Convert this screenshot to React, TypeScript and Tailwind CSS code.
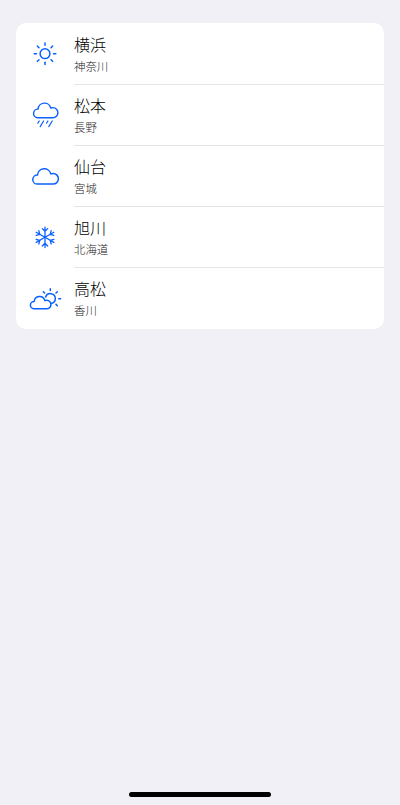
import type { ReactNode } from "react";

const sunRays = [0, 45, 90, 135, 180, 225, 270, 315];
const flakeArms = [0, 60, 120, 180, 240, 300];

function Glyph({ children }: { children: ReactNode }) {
  return (
    <svg viewBox="0 0 40 36" className="mt-3 h-9 w-10 shrink-0 fill-none stroke-[#0a60ff] stroke-[1.5]" strokeLinecap="round" strokeLinejoin="round">
      {children}
    </svg>
  );
}

const cloudPath = "M12 26.1H28a5.3 5.3 0 0 0 .2-10.6c-.9 0-1.7.1-2.4.4A6.75 6.75 0 0 0 12.5 17.1A4.5 4.5 0 0 0 12 26.1Z";

function Sun() {
  return (
    <Glyph>
      <circle cx="20" cy="17.7" r="4.9" />
      {sunRays.map((a) => (
        <path key={a} d="M20 9.2V6.9" transform={`rotate(${a} 20 17.7)`} />
      ))}
    </Glyph>
  );
}

function Rain() {
  return (
    <Glyph>
      <path d={cloudPath} transform="translate(1.2 -4.1) scale(.95)" />
      <path d="M14.2 24l-1.4 2.2M18.6 24l-3.4 5.6M22.9 24l-1.4 2.2M27.2 24l-3.4 5.6" strokeWidth="1.2" />
    </Glyph>
  );
}

function Cloud() {
  return (
    <Glyph>
      <path d={cloudPath} />
    </Glyph>
  );
}

function Snow() {
  return (
    <Glyph>
      {flakeArms.map((a) => (
        <path key={a} d="M20 18.3V8.1M17.3 9.6l2.7 2.7 2.7-2.7" strokeWidth="1.3" transform={`rotate(${a} 20 18.3)`} />
      ))}
    </Glyph>
  );
}

function PartlyCloudy() {
  return (
    <Glyph>
      <path d="M20.6 16.9a5 5 0 1 1 5.6 6.6" />
      <path d="M25.3 10.6V8.7M31 13l1.3-1.3M33.7 18.7h1.9M31 24.4l1.3 1.3M19.6 13l-1.3-1.3" />
      <path d={cloudPath} strokeWidth="1.85" transform="translate(-.8 7.9) scale(.8)" />
    </Glyph>
  );
}

const places = [
  { city: "横浜", prefecture: "神奈川", icon: <Sun /> },
  { city: "松本", prefecture: "長野", icon: <Rain /> },
  { city: "仙台", prefecture: "宮城", icon: <Cloud /> },
  { city: "旭川", prefecture: "北海道", icon: <Snow /> },
  { city: "高松", prefecture: "香川", icon: <PartlyCloudy /> },
];

export default function App() {
  return (
    <main className="flex h-[805px] w-full flex-col justify-between bg-[#f1f0f6] pt-[23px] pb-2 font-['Noto_Sans_CJK_JP',sans-serif] font-light">
      <ul className="mx-4 overflow-hidden rounded-[10px] bg-white pt-px">
        {places.map((p) => (
          <li key={p.city} className="group flex h-[61px] gap-[9px] pl-[9px]">
            {p.icon}
            <div className="flex flex-1 flex-col border-b border-[#e5e5e7] pt-2 group-last:border-b-0">
              <span className="text-[16px] leading-[25px] text-black">{p.city}</span>
              <span className="text-[11.4px] leading-[18px] text-[#222]">{p.prefecture}</span>
            </div>
          </li>
        ))}
      </ul>
      <div className="h-[5px] w-[142px] self-center rounded-full bg-black" />
    </main>
  );
}
